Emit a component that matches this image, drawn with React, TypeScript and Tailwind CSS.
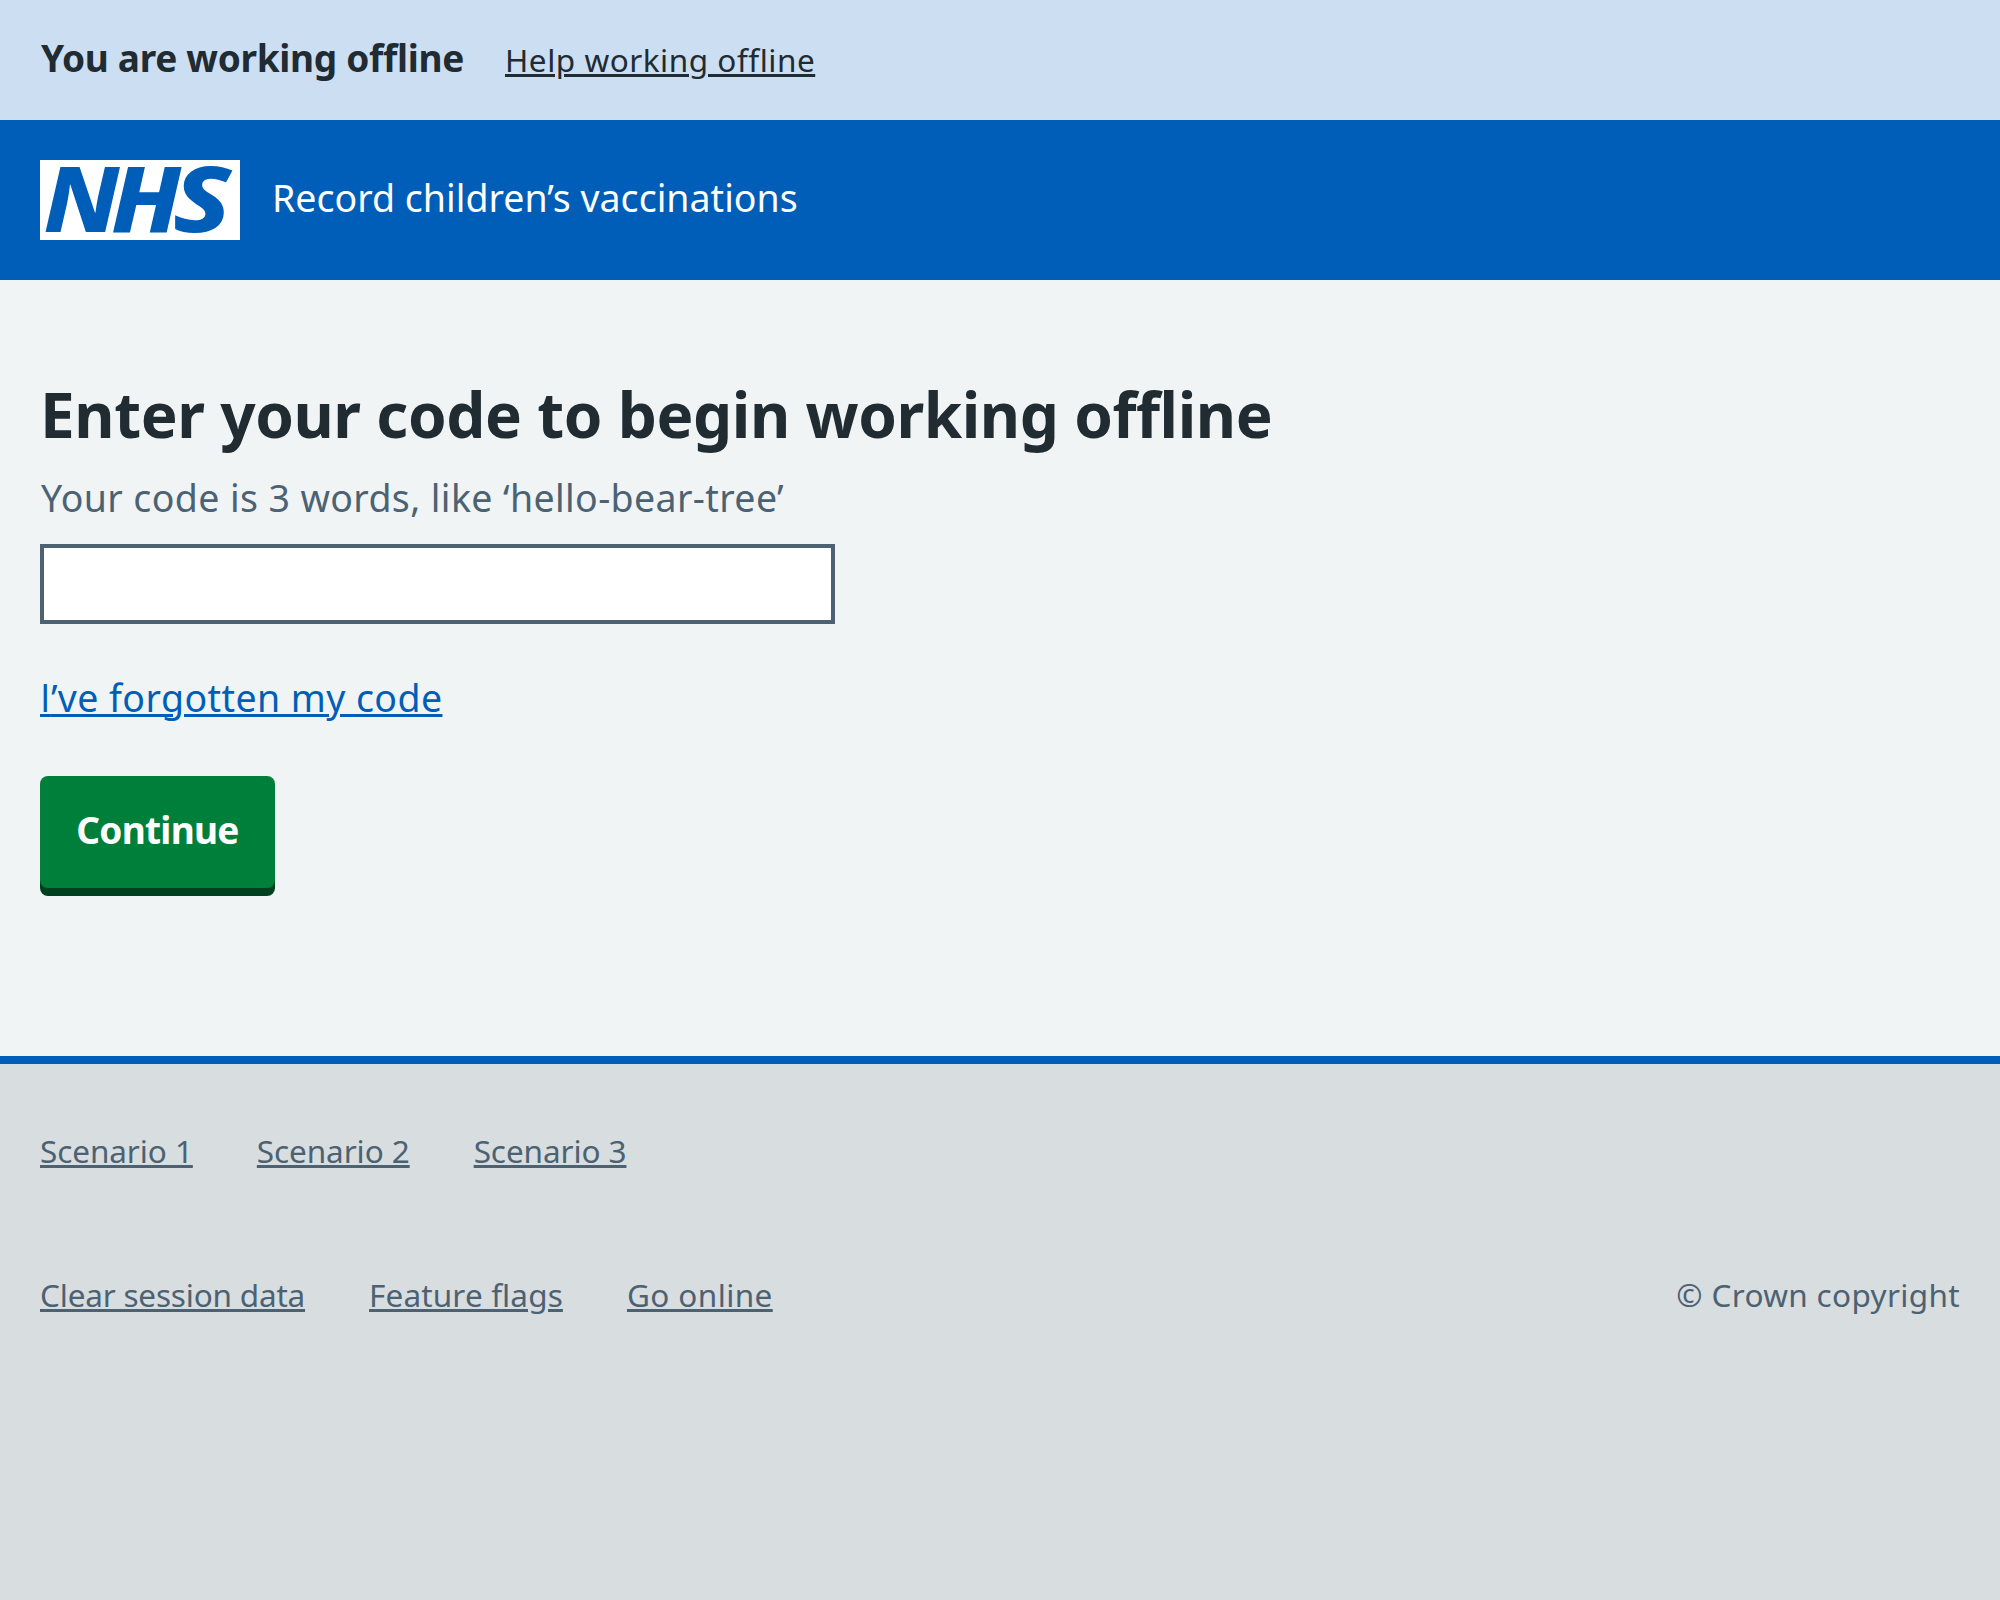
import type { ReactNode } from "react";

const underline = "underline decoration-[3px] underline-offset-2";

function NhsLogo() {
  return (
    <svg
      className="block h-20 w-[200px] shrink-0"
      viewBox="0 0 200 80"
      role="img"
      aria-label="NHS"
      fill="#005eb8"
      fontFamily="Noto Sans, sans-serif"
      fontStyle="italic"
      fontSize="91"
      fontWeight="800"
    >
      <rect width="200" height="80" fill="#ffffff" />
      <text transform="translate(3.5 72.4) scale(1.08 1)">N</text>
      <text transform="translate(71.1 72.4) scale(1.09 1)">H</text>
      <text transform="translate(133 72.4) scale(1.19 1)">S</text>
    </svg>
  );
}

function FooterLink({ className, children }: { className: string; children: ReactNode }) {
  return (
    <li>
      <a href="#" className={`${underline} ${className}`}>
        {children}
      </a>
    </li>
  );
}

export default function App() {
  return (
    <div className="flex min-h-[1600px] flex-col bg-[#f0f4f5] font-['Noto_Sans',sans-serif] whitespace-nowrap text-[#212b32] [font-variant-ligatures:none]">
      <div className="flex h-[120px] items-baseline gap-10 bg-[#ccdef2] px-10 pt-[30px]">
        <p className="w-[425px] pl-px text-[37px] leading-[55px] font-bold tracking-[-0.31px]">
          You are working offline
        </p>
        <a href="#" className={`${underline} text-[31.5px] leading-[47px] tracking-[0.52px]`}>
          Help working offline
        </a>
      </div>

      <header className="flex h-40 items-center gap-8 bg-[#005eb8] px-10 text-white">
        <NhsLogo />
        <span className="pb-[5px] text-[37.5px] leading-[56px] tracking-[0.02px]">
          Record children’s vaccinations
        </span>
      </header>

      <main className="flex h-[776px] flex-col items-start px-10 pt-[94px]">
        <h1 className="text-[62px] leading-[80px] font-bold tracking-[-0.43px]">
          Enter your code to begin working offline
        </h1>
        <p className="mt-[15px] pl-px text-[37.5px] leading-[57px] tracking-[0.38px] text-[#4c6272]">
          Your code is 3 words, like ‘hello-bear-tree’
        </p>
        <input
          type="text"
          aria-label="Your code"
          className="mt-[18px] h-20 w-[795px] border-4 border-[#4c6272] bg-white px-2 text-[37.5px] outline-none"
        />
        <a
          href="#"
          className={`${underline} mt-[45px] text-[37.5px] leading-[57px] tracking-[0.41px] text-[#005eb8]`}
        >
          <span className="font-['Open_Sans',sans-serif] leading-none">I</span>’ve forgotten my code
        </a>
        <button
          type="button"
          className="mt-[50px] flex h-28 w-[235px] items-center justify-center rounded-lg bg-[#007f3b] pb-[5px] text-[37px] leading-[56px] font-bold tracking-[-0.72px] text-white shadow-[0_8px_0_#00401e]"
        >
          Continue
        </button>
      </main>

      <footer className="flex-1 border-t-8 border-[#005eb8] bg-[#d8dde0] px-10 pt-[63px] text-[31.5px] leading-[47px] text-[#4c6272]">
        <ul className="flex gap-16">
          <FooterLink className="tracking-[-0.09px]">Scenario 1</FooterLink>
          <FooterLink className="tracking-[-0.09px]">Scenario 2</FooterLink>
          <FooterLink className="tracking-[-0.09px]">Scenario 3</FooterLink>
        </ul>
        <div className="mt-[97px] flex justify-between">
          <ul className="flex gap-16">
            <FooterLink className="tracking-[-0.2px]">Clear session data</FooterLink>
            <FooterLink className="tracking-[0.14px]">Feature flags</FooterLink>
            <FooterLink className="tracking-[0.4px]">Go online</FooterLink>
          </ul>
          <p className="tracking-[0.34px]">© Crown copyright</p>
        </div>
      </footer>
    </div>
  );
}
